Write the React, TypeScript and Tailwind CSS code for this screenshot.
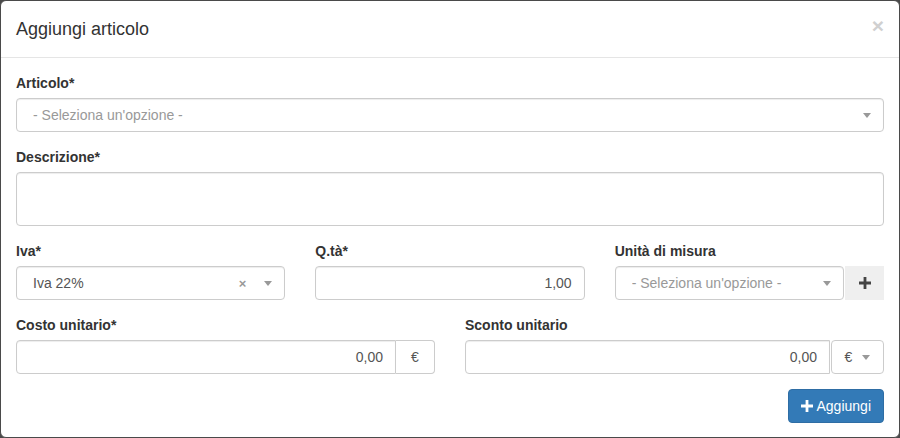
import React from 'react';

const font = { fontFamily: '"Liberation Sans", Arial, sans-serif' };

function Caret() {
  return (
    <span className="inline-block h-0 w-0 border-x-[4px] border-t-[5px] border-x-transparent border-t-[#999]" />
  );
}

function PlusIcon({ color, size = 12 }: { color: string; size?: number }) {
  return (
    <svg width={size} height={size} viewBox="0 0 12 12" className="shrink-0">
      <path d="M4.6 0h2.8v4.6H12v2.8H7.4V12H4.6V7.4H0V4.6h4.6z" fill={color} />
    </svg>
  );
}

function Label({ children }: { children: React.ReactNode }) {
  return (
    <div className="mb-[5px] h-5 text-[14px] font-bold leading-5 text-[#333]">
      {children}
    </div>
  );
}

function Select2({
  value,
  placeholder,
  clearable,
  className = '',
}: {
  value?: string;
  placeholder?: string;
  clearable?: boolean;
  className?: string;
}) {
  return (
    <div
      className={`flex h-[34px] items-center rounded border border-[#ccc] bg-white pl-4 pr-3 text-[14px] shadow-[inset_0_1px_1px_rgba(0,0,0,0.075)] ${className}`}
    >
      <span className={`flex-1 truncate ${value ? 'text-[#555]' : 'text-[#999]'}`}>
        {value ?? placeholder}
      </span>
      {clearable && (
        <span className="mr-[18px] text-[13px] font-bold leading-none text-[#999]">×</span>
      )}
      <Caret />
    </div>
  );
}

function TextInput({ value, className = '' }: { value?: string; className?: string }) {
  return (
    <div
      className={`flex h-[34px] items-center justify-end border border-[#ccc] bg-white px-3 text-[14px] text-[#555] shadow-[inset_0_1px_1px_rgba(0,0,0,0.075)] ${className}`}
    >
      {value}
    </div>
  );
}

export default function App() {
  return (
    <div className="h-[438px] w-[900px] bg-[#4a4a4a]" style={font}>
      <div className="flex h-[438px] flex-col rounded-md border border-[#4a4a4a] bg-white">
        <div className="flex h-[57px] items-start justify-between border-b border-[#e5e5e5] px-[15px] pt-[15px]">
          <h4 className="text-[18px] leading-[26px] text-[#333]">Aggiungi articolo</h4>
          <span className="-mt-[1px] text-[21px] font-bold leading-[21px] text-[#d0d0d0]">×</span>
        </div>

        <div className="px-[15px] pt-[15px]">
          <div className="mb-[15px]">
            <Label>Articolo*</Label>
            <Select2 placeholder="- Seleziona un'opzione -" />
          </div>

          <div className="mb-[15px]">
            <Label>Descrizione*</Label>
            <div className="h-[54px] rounded border border-[#ccc] shadow-[inset_0_1px_1px_rgba(0,0,0,0.075)]" />
          </div>

          <div className="mb-[15px] grid grid-cols-3 gap-x-[30px]">
            <div>
              <Label>Iva*</Label>
              <Select2 value="Iva 22%" clearable />
            </div>
            <div>
              <Label>Q.tà*</Label>
              <TextInput value="1,00" className="rounded" />
            </div>
            <div>
              <Label>Unità di misura</Label>
              <div className="flex">
                <Select2 placeholder="- Seleziona un'opzione -" className="flex-1" />
                <div className="ml-px flex h-[34px] w-[39px] items-center justify-center bg-[#efefef]">
                  <PlusIcon color="#444" />
                </div>
              </div>
            </div>
          </div>

          <div className="mb-[15px] grid grid-cols-2 gap-x-[30px]">
            <div>
              <Label>Costo unitario*</Label>
              <div className="flex">
                <TextInput value="0,00" className="flex-1 rounded-l" />
                <div className="flex h-[34px] w-[39px] items-center justify-center rounded-r border border-l-0 border-[#ccc] text-[14px] text-[#555]">
                  €
                </div>
              </div>
            </div>
            <div>
              <Label>Sconto unitario</Label>
              <div className="flex">
                <TextInput value="0,00" className="flex-1 rounded-l" />
                <div className="ml-px flex h-[34px] w-[53px] items-center justify-center gap-[10px] rounded border border-[#ccc] text-[14px] text-[#555]">
                  <span>€</span>
                  <Caret />
                </div>
              </div>
            </div>
          </div>

          <div className="flex justify-end">
            <button className="flex h-[34px] items-center gap-[4px] rounded border border-[#2e6da4] bg-[#337ab7] px-3 text-[14px] text-white">
              <PlusIcon color="#fff" />
              Aggiungi
            </button>
          </div>
        </div>
      </div>
    </div>
  );
}
